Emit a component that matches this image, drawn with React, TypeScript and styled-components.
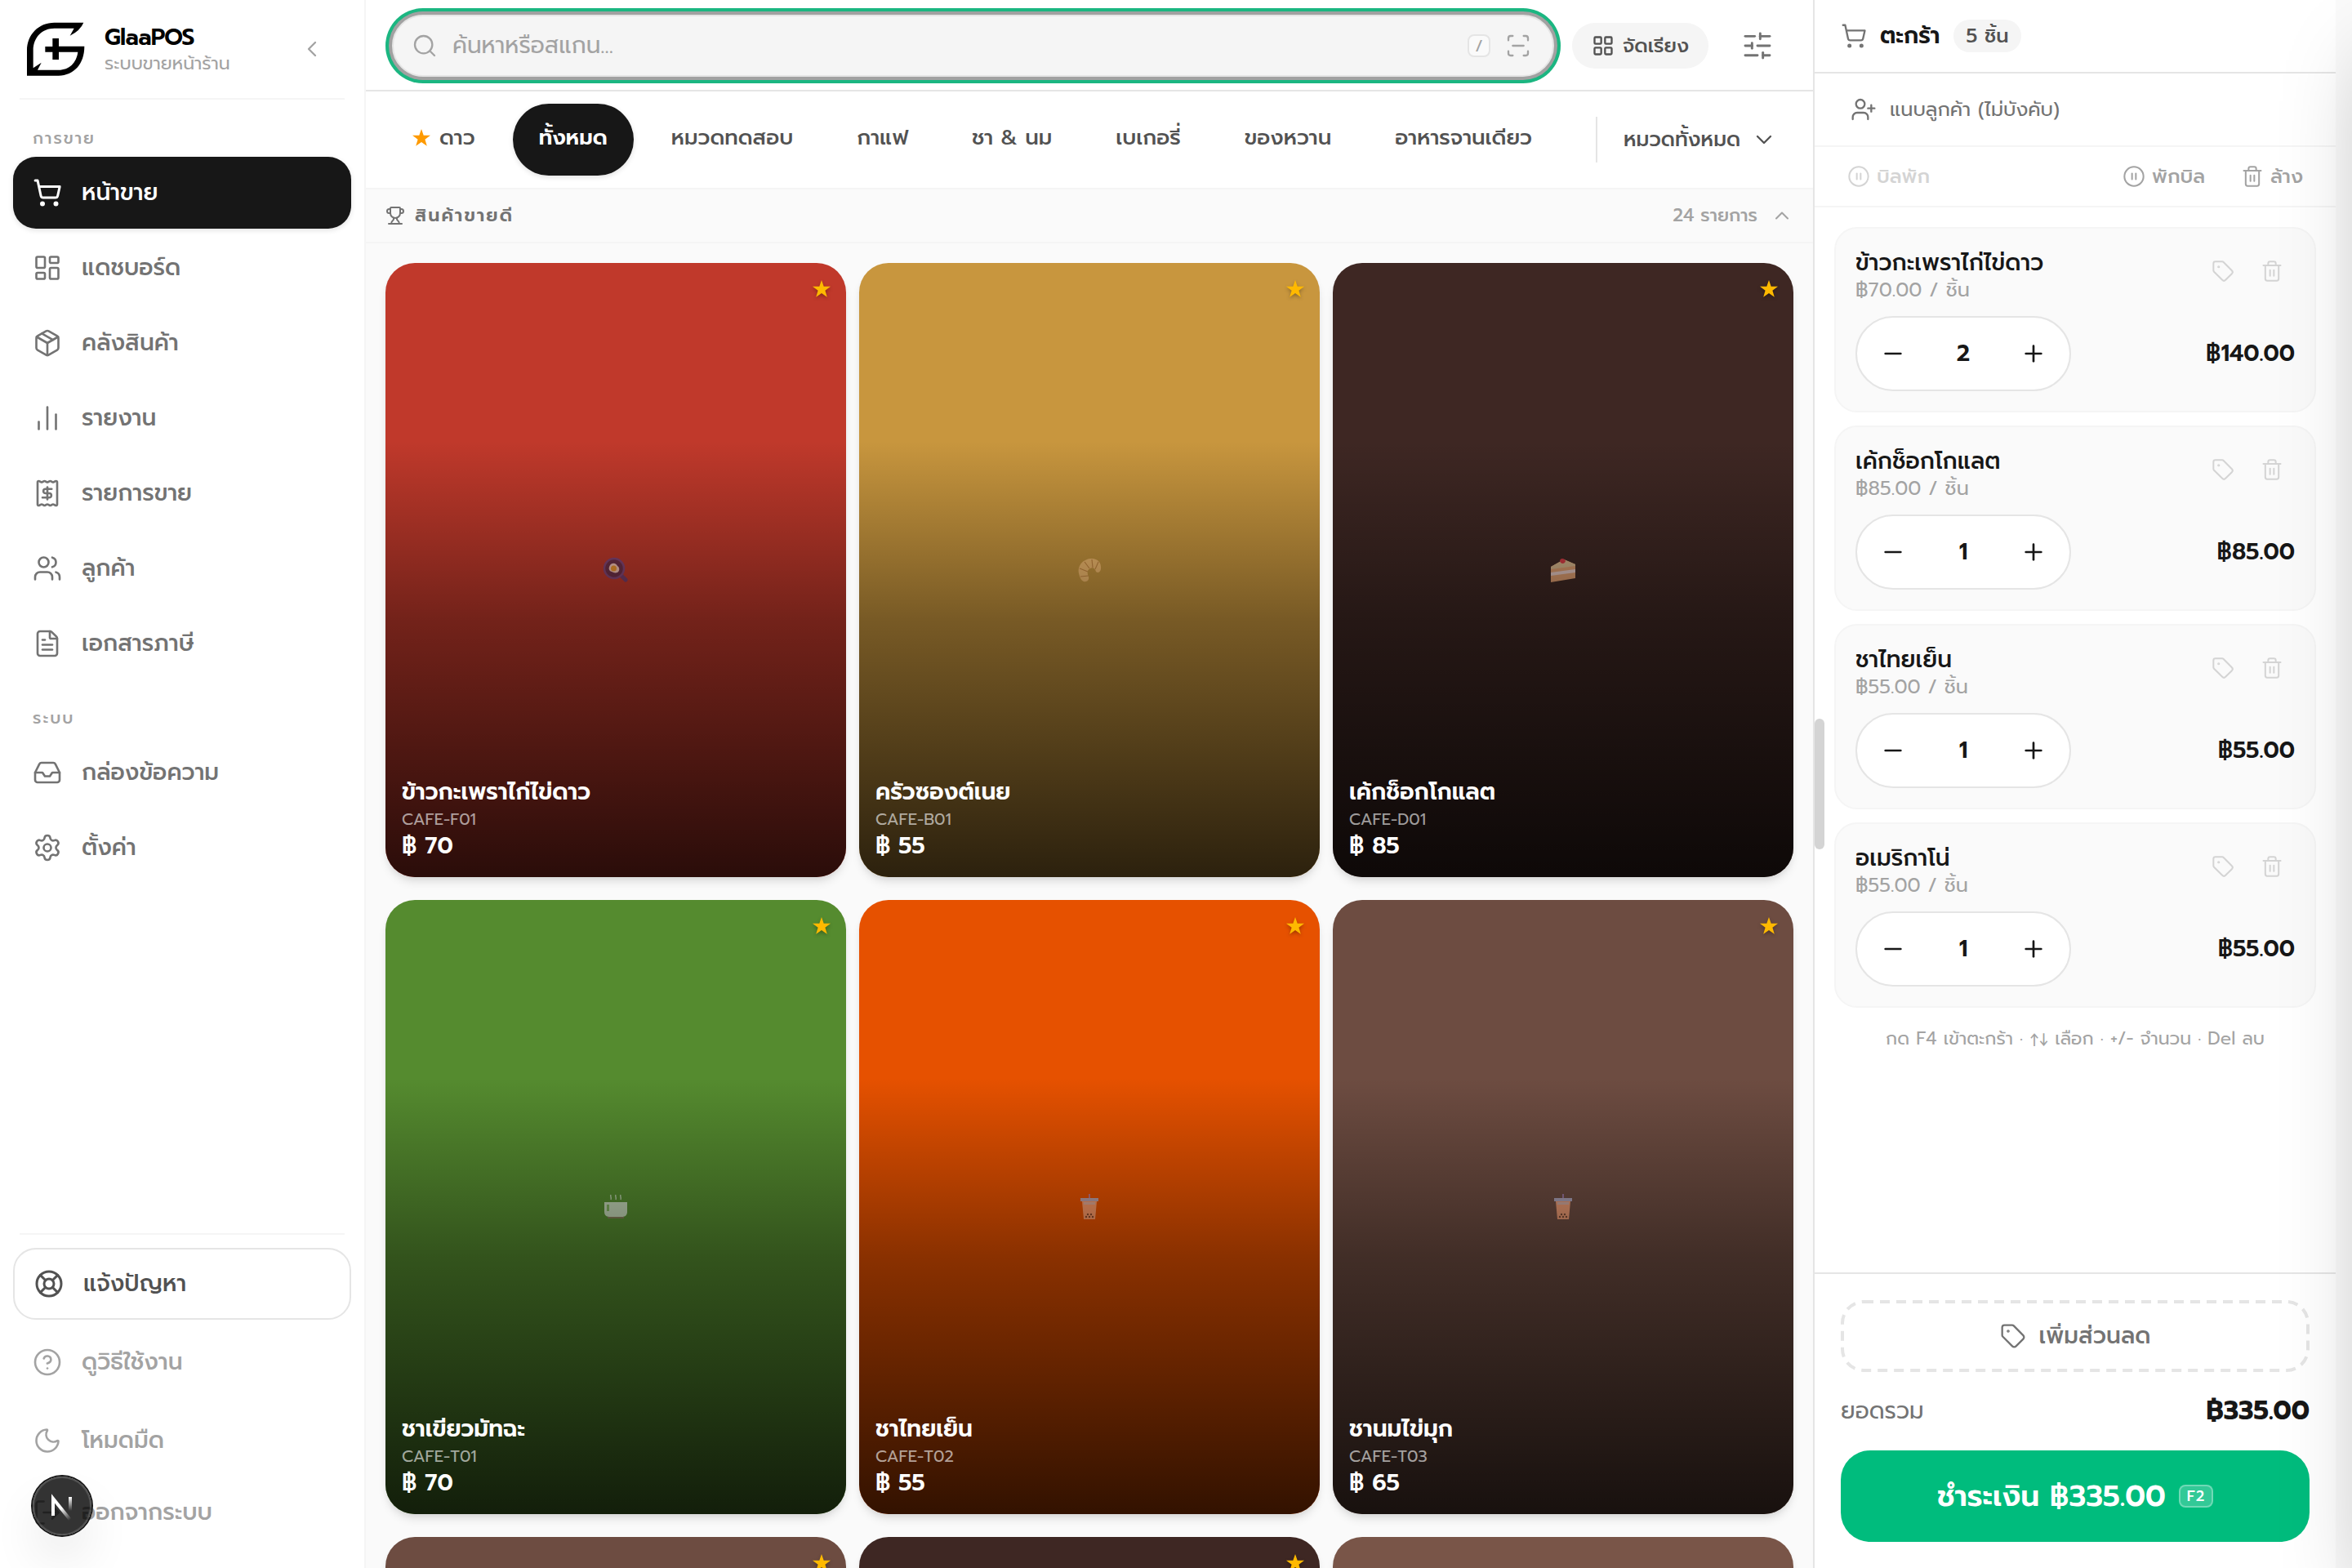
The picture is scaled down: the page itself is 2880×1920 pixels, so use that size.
import React from "react";
import styled, { createGlobalStyle, css } from "styled-components";
import {
  ChartNoAxesColumn,
  ChevronDown,
  ChevronLeft,
  ChevronUp,
  CircleHelp,
  CirclePause,
  FileText,
  Inbox,
  LayoutDashboard,
  LayoutGrid,
  LifeBuoy,
  LogOut,
  Minus,
  Moon,
  Package,
  Plus,
  ScanLine,
  Search,
  Settings,
  ShoppingCart,
  SlidersHorizontal,
  Tag,
  Trash2,
  Trophy,
  UserPlus,
  Users,
} from "lucide-react";

const color = {
  ink: "#171717",
  strong: "#525252",
  text: "#737373",
  muted: "#a3a3a3",
  faint: "#d4d4d4",
  line: "#e5e5e5",
  soft: "#f5f5f5",
  canvas: "#fafafa",
  green: "#00bc7d",
};

const GlobalStyle = createGlobalStyle`
  *, *::before, *::after { box-sizing: border-box; }
  body {
    margin: 0;
    overflow: hidden;
    background: ${color.canvas};
    color: ${color.ink};
    font-family: Prompt, "Noto Sans Thai", "Noto Sans", sans-serif;
    font-size: 28px;
    line-height: 40px;
  }
  button, input, select {
    font: inherit;
    color: inherit;
    letter-spacing: inherit;
    background: none;
    border: 0;
    padding: 0;
    margin: 0;
  }
  button { cursor: pointer; }
  h1, h2, h3, p, ul { margin: 0; padding: 0; font: inherit; list-style: none; }
  svg { flex: none; display: block; }
`;

const Page = styled.div`
  display: flex;
  height: 100vh;
  padding-right: 20px;
  overflow: hidden;
`;

/* ---------- sidebar ---------- */

const Sidebar = styled.aside`
  flex: 0 0 448px;
  display: flex;
  flex-direction: column;
  background: #fff;
  border-right: 2px solid ${color.soft};
  padding-bottom: 24px;
`;

const Brand = styled.header`
  display: flex;
  align-items: center;
  gap: 24px;
  margin: 0 24px;
  padding: 24px 8px;
  border-bottom: 2px solid ${color.soft};
`;

const BrandText = styled.div`
  flex: 1;
`;

const BrandName = styled.h1`
  font-size: 28px;
  line-height: 36px;
  font-weight: 600;
  letter-spacing: -0.025em;
  color: #000;
`;

const BrandTag = styled.p`
  font-size: 22px;
  line-height: 28px;
  color: ${color.muted};
`;

const CollapseButton = styled.button`
  display: grid;
  place-items: center;
  width: 64px;
  height: 64px;
  color: ${color.muted};
`;

const NavGroup = styled.nav`
  display: flex;
  flex-direction: column;
  gap: 4px;
  padding: 32px 16px 0;
`;

const NavLabel = styled.h2`
  padding: 0 24px;
  margin-bottom: 4px;
  font-size: 20px;
  line-height: 30px;
  font-weight: 500;
  letter-spacing: 0.1em;
  color: ${color.muted};
`;

type Tone = "normal" | "active" | "outlined" | "quiet";

const tones = {
  normal: css`
    color: ${color.text};
  `,
  active: css`
    color: #fff;
    background: ${color.ink};
    box-shadow: 0 2px 6px rgba(0, 0, 0, 0.12);
  `,
  outlined: css`
    color: ${color.strong};
    border: 2px solid ${color.line};
    margin-bottom: 8px;
  `,
  quiet: css`
    color: ${color.muted};
  `,
};

const itemStyle = css<{ $tone: Tone }>`
  display: flex;
  align-items: center;
  gap: 24px;
  height: 88px;
  padding: 0 24px;
  border-radius: 28px;
  font-weight: 500;
  text-align: left;
  text-decoration: none;
  ${(p) => tones[p.$tone]}
`;

const NavLink = styled.a<{ $tone: Tone }>`
  ${itemStyle}
`;

const NavButton = styled.button<{ $tone: Tone }>`
  ${itemStyle}
`;

const SidebarFoot = styled.div`
  display: flex;
  flex-direction: column;
  margin-top: auto;
  padding: 0 16px;
`;

const FootRule = styled.hr`
  width: calc(100% - 16px);
  height: 2px;
  margin: 0 8px 16px;
  border: 0;
  background: ${color.soft};
`;

const FootGap = styled.div`
  display: flex;
  flex-direction: column;
  gap: 8px;
`;

/* ---------- catalogue ---------- */

const Main = styled.main`
  flex: 1;
  min-width: 0;
  display: flex;
  flex-direction: column;
`;

const TopBar = styled.div`
  display: flex;
  align-items: center;
  gap: 16px;
  height: 112px;
  padding: 2px 24px 0 32px;
  background: #fff;
  border-bottom: 2px solid ${color.line};
`;

const SearchBox = styled.label`
  flex: 1;
  display: flex;
  align-items: center;
  gap: 18px;
  height: 76px;
  margin-right: 6px;
  padding: 0 26px 0 22px;
  color: ${color.muted};
  background: ${color.soft};
  border: 2px solid ${color.line};
  border-radius: 999px;
  box-shadow: 0 0 0 4px #a1a1a1, 0 0 0 8px #1bb681;
`;

const SearchInput = styled.input`
  flex: 1;
  min-width: 0;
  outline: 0;
  color: ${color.ink};
  &::placeholder {
    color: ${color.muted};
    opacity: 1;
  }
`;

const SlashKey = styled.kbd`
  display: grid;
  place-items: center;
  width: 28px;
  height: 28px;
  border: 2px solid ${color.line};
  border-radius: 8px;
  background: ${color.canvas};
  font: inherit;
  font-size: 20px;
  line-height: 24px;
`;

const SortButton = styled.button`
  display: flex;
  align-items: center;
  gap: 10px;
  height: 56px;
  padding: 0 24px;
  border-radius: 28px;
  background: ${color.soft};
  color: ${color.strong};
  font-size: 24px;
  font-weight: 500;
`;

const FilterButton = styled.button`
  display: grid;
  place-items: center;
  width: 88px;
  height: 88px;
  color: ${color.text};
`;

const CategoryBar = styled.div`
  display: flex;
  align-items: center;
  height: 120px;
  padding: 0 24px;
  background: #fff;
  border-bottom: 2px solid ${color.soft};
`;

const Pills = styled.div`
  flex: 1;
  display: flex;
  gap: 14px;
`;

const Pill = styled.button<{ $active?: boolean }>`
  display: flex;
  align-items: center;
  gap: 10px;
  height: 88px;
  padding: 0 32px 4px;
  border-radius: 44px;
  font-size: 26px;
  font-weight: ${(p) => (p.$active ? 600 : 500)};
  white-space: nowrap;
  color: ${(p) => (p.$active ? "#fff" : color.strong)};
  background: ${(p) => (p.$active ? color.ink : "transparent")};
  box-shadow: ${(p) => (p.$active ? "0 2px 6px rgba(0, 0, 0, 0.12)" : "none")};
`;

const AllCategories = styled.label`
  display: flex;
  align-items: center;
  gap: 12px;
  height: 56px;
  padding: 0 20px 0 32px;
  border-left: 2px solid ${color.line};
  color: ${color.strong};
`;

const CategorySelect = styled.select`
  appearance: none;
  outline: 0;
  font-size: 25px;
  font-weight: 500;
`;

const SectionHead = styled.button`
  display: flex;
  align-items: center;
  gap: 12px;
  height: 66px;
  padding: 0 24px;
  border-bottom: 2px solid ${color.soft};
  color: ${color.text};
  text-align: left;
`;

const SectionTitle = styled.span`
  flex: 1;
  font-size: 22px;
  line-height: 32px;
  font-weight: 600;
  letter-spacing: 0.1em;
`;

const SectionCount = styled.span`
  display: flex;
  align-items: center;
  gap: 16px;
  font-size: 22px;
  line-height: 32px;
  font-weight: 500;
  color: ${color.muted};
`;

const Shelf = styled.div`
  flex: 1;
  min-height: 0;
  overflow: hidden;
`;

const Grid = styled.div`
  display: grid;
  grid-template-columns: repeat(3, 1fr);
  gap: 28px 16px;
  padding: 24px;
`;

const Card = styled.button<{ $color: string }>`
  position: relative;
  display: grid;
  aspect-ratio: 3 / 4;
  border-radius: 36px;
  overflow: hidden;
  color: #fff;
  text-align: left;
  background: ${(p) => p.$color};
  box-shadow: 0 8px 12px -2px rgba(0, 0, 0, 0.1), 0 4px 8px -4px rgba(0, 0, 0, 0.1);
  & > * {
    grid-area: 1 / 1;
  }
`;

const CardArt = styled.span`
  place-self: center;
  opacity: 0.85;
`;

const CardText = styled.span`
  position: relative;
  align-self: stretch;
  display: flex;
  flex-direction: column;
  justify-content: flex-end;
  padding: 20px;
  background: linear-gradient(
    to bottom,
    rgba(0, 0, 0, 0) 29%,
    rgba(0, 0, 0, 0.4) 58%,
    rgba(0, 0, 0, 0.78) 100%
  );
`;

const CardName = styled.span`
  font-size: 28px;
  line-height: 36px;
  font-weight: 600;
`;

const CardCode = styled.span`
  font-size: 20px;
  line-height: 30px;
  color: rgba(255, 255, 255, 0.6);
`;

const CardPrice = styled.span`
  font-size: 28px;
  line-height: 36px;
  font-weight: 600;
`;

const CardStar = styled.span`
  position: absolute;
  top: 20px;
  right: 18px;
  filter: drop-shadow(0 2px 2px rgba(0, 0, 0, 0.3));
`;

/* ---------- cart ---------- */

const Cart = styled.aside`
  position: relative;
  flex: 0 0 640px;
  display: flex;
  flex-direction: column;
  background: #fff;
  border-left: 2px solid ${color.line};
`;

const ResizeHandle = styled.div`
  position: absolute;
  left: 0;
  top: calc(50% - 80px);
  width: 12px;
  height: 160px;
  border-radius: 6px;
  background: ${color.faint};
`;

const CartHead = styled.header`
  display: flex;
  align-items: center;
  gap: 16px;
  height: 90px;
  padding: 0 32px;
  border-bottom: 2px solid ${color.line};
  color: ${color.text};
`;

const CartTitle = styled.h2`
  font-weight: 600;
  font-size: 28px;
  color: ${color.ink};
`;

const CartCount = styled.span`
  height: 40px;
  padding: 0 16px;
  border-radius: 20px;
  background: ${color.soft};
  color: ${color.strong};
  font-size: 24px;
  font-weight: 500;
`;

const CustomerButton = styled.button`
  display: flex;
  align-items: center;
  gap: 16px;
  height: 90px;
  padding: 0 44px;
  border-bottom: 2px solid ${color.soft};
  color: ${color.text};
  font-size: 24px;
`;

const BillBar = styled.div`
  display: flex;
  align-items: center;
  height: 74px;
  padding: 0 18px;
  border-bottom: 2px solid ${color.soft};
`;

const BillButton = styled.button`
  display: flex;
  align-items: center;
  gap: 8px;
  height: 64px;
  padding: 0 22px;
  color: ${color.muted};
  font-size: 24px;
  font-weight: 500;
  &:first-child {
    margin-right: auto;
  }
  &:disabled {
    color: ${color.faint};
  }
`;

const Lines = styled.ul`
  flex: 1;
  min-height: 0;
  display: flex;
  flex-direction: column;
  gap: 16px;
  padding: 24px;
`;

const Line = styled.li`
  display: flex;
  flex-direction: column;
  gap: 16px;
  padding: 24px;
  border: 2px solid ${color.soft};
  border-radius: 28px;
  background: ${color.canvas};
`;

const LineRow = styled.div`
  display: flex;
  align-items: center;
  justify-content: space-between;
`;

const LineName = styled.h3`
  font-size: 28px;
  line-height: 35px;
  font-weight: 500;
`;

const LineUnit = styled.p`
  font-size: 24px;
  line-height: 32px;
  color: ${color.muted};
`;

const LineTools = styled.div`
  display: flex;
  align-self: flex-start;
  gap: 4px;
`;

const ToolButton = styled.button`
  display: grid;
  place-items: center;
  width: 56px;
  height: 56px;
  color: ${color.faint};
`;

const Stepper = styled.div`
  display: flex;
  align-items: center;
  width: 264px;
  height: 92px;
  border: 2px solid ${color.line};
  border-radius: 46px;
  background: #fff;
`;

const StepButton = styled.button`
  display: grid;
  place-items: center;
  width: 88px;
  height: 88px;
`;

const Quantity = styled.output`
  flex: 1;
  text-align: center;
  font-weight: 600;
`;

const LineTotal = styled.strong`
  font-weight: 600;
`;

const Hint = styled.li`
  padding-top: 6px;
  text-align: center;
  font-size: 22px;
  line-height: 32px;
  color: ${color.muted};
`;

const CartFoot = styled.footer`
  display: flex;
  flex-direction: column;
  gap: 24px;
  padding: 32px;
  border-top: 2px solid ${color.line};
`;

const DiscountButton = styled.button`
  position: relative;
  display: flex;
  align-items: center;
  justify-content: center;
  gap: 16px;
  height: 88px;
  color: ${color.text};
  font-weight: 500;
`;

const DashedOutline = styled.svg`
  position: absolute;
  inset: 0;
  width: 100%;
  height: 100%;
  rect {
    width: calc(100% - 4px);
    height: calc(100% - 4px);
  }
`;

const TotalRow = styled.div`
  display: flex;
  align-items: center;
  justify-content: space-between;
  line-height: 48px;
  color: ${color.text};
`;

const TotalAmount = styled.strong`
  font-size: 32px;
  font-weight: 700;
  color: ${color.ink};
`;

const PayButton = styled.button`
  display: flex;
  align-items: center;
  justify-content: center;
  gap: 16px;
  height: 112px;
  border-radius: 36px;
  background: ${color.green};
  color: #fff;
  font-size: 36px;
  font-weight: 600;
`;

const PayKey = styled.kbd`
  padding: 0 8px;
  border: 2px solid rgba(255, 255, 255, 0.3);
  border-radius: 8px;
  background: rgba(255, 255, 255, 0.2);
  font: inherit;
  font-size: 18px;
  line-height: 24px;
  font-weight: 500;
  letter-spacing: 0.05em;
`;

/* ---------- overlays ---------- */

const Drawer = styled.div`
  position: fixed;
  top: 0;
  bottom: 0;
  left: 100%;
  width: 640px;
  box-shadow: 0 50px 100px -24px rgba(0, 0, 0, 0.25);
`;

const DevBadge = styled.button`
  position: fixed;
  left: 40px;
  bottom: 40px;
  width: 72px;
  height: 72px;
  border-radius: 50%;
  background: rgba(0, 0, 0, 0.8);
  box-shadow: 0 0 0 2px #171717, inset 0 0 0 2px rgba(255, 255, 255, 0.14),
    0 32px 64px -16px rgba(0, 0, 0, 0.24);
`;

/* ---------- drawings ---------- */

const Logo = () => (
  <svg width="72" height="72" viewBox="36 72 216 216" aria-hidden="true">
    <path d="M247 83H140C82 83 39 127 39 185V278H155C212 276 250 235 250 170H156V141H133V171H106V191H133V219H156V191H226C221 230 195 257 155 257H78L92 230L62 250V185C62 137 95 104 140 104H212L197 131Q235 112 247 83Z" />
  </svg>
);

const Star = ({ size, fill }: { size: number; fill: string }) => (
  <svg width={size} height={size} viewBox="0 0 24 24" aria-hidden="true">
    <path fill={fill} d="M12 1l2.700 7.700H23l-6.600 5 2.400 8L12 17l-6.800 4.700 2.400-8L1 8.700h8.300z" />
  </svg>
);

const ReceiptIcon = ({ size, strokeWidth }: { size: number; strokeWidth: number }) => (
  <svg
    width={size}
    height={size}
    viewBox="0 0 24 24"
    fill="none"
    stroke="currentColor"
    strokeWidth={strokeWidth}
    strokeLinecap="round"
    strokeLinejoin="round"
    aria-hidden="true"
  >
    <path d="M4 3a1 1 0 0 1 1-1 1.300 1.300 0 0 1 .7.2l.933.6a1.300 1.300 0 0 0 1.400 0l.934-.6a1.300 1.300 0 0 1 1.400 0l.933.6a1.300 1.300 0 0 0 1.400 0l.933-.6a1.300 1.300 0 0 1 1.400 0l.934.6a1.300 1.300 0 0 0 1.400 0l.933-.6A1.300 1.300 0 0 1 19 2a1 1 0 0 1 1 1v18a1 1 0 0 1-1 1 1.300 1.300 0 0 1-.7-.2l-.933-.6a1.300 1.300 0 0 0-1.400 0l-.934.6a1.300 1.300 0 0 1-1.400 0l-.933-.6a1.300 1.300 0 0 0-1.400 0l-.933.6a1.300 1.300 0 0 1-1.400 0l-.934-.6a1.300 1.300 0 0 0-1.400 0l-.933.6a1.300 1.300 0 0 1-.7.2 1 1 0 0 1-1-1z" />
    <path d="M12 7v10" />
    <path d="M15.500 8.500H10.500a1.750 1.750 0 0 0 0 3.500h3a1.750 1.750 0 0 1 0 3.500H8" />
  </svg>
);

type Food = "egg" | "croissant" | "cake" | "cup" | "boba";

const drawings: Record<Food, React.ReactNode> = {
  egg: (
    <>
      <path d="M23 23l5 5" stroke="#6a3f78" strokeWidth="5" strokeLinecap="round" />
      <circle cx="14" cy="14" r="12" fill="#63304f" stroke="#7d4a86" strokeWidth="2.500" />
      <path d="M9 10c3-4 8-2 9 1 3 2 3 6 0 8-3 1-5 0-7-1-4-1-4-5-2-8z" fill="#ffdccf" />
      <circle cx="13.500" cy="14" r="3.500" fill="#f8a62e" />
    </>
  ),
  croissant: (
    <>
      <path
        d="M3 20C1 10 9 2 19 2c7 0 12 5 11 13-1 4-4 5-6 3-1-4-4-6-7-4-4 2-4 6-2 10 1 4-2 7-6 6-3-1-5-5-6-10z"
        fill="#ffc478"
      />
      <path d="M10 6l6 8M4 14l10 4M5 24l10-1M19 3l1 10M27 6l-4 9" stroke="#c98844" strokeWidth="1.200" />
    </>
  ),
  cake: (
    <>
      <path d="M1 12L17 3l14 6v17L1 31z" fill="#f7b07c" />
      <path d="M1 19l30-4v4L1 23z" fill="#ffe2dc" />
      <path d="M1 12L17 3l14 6v2L1 15z" fill="#f0cd9c" />
      <path d="M12 5c0-4 6-4 7 0-1 4-6 4-7 0z" fill="#f0404a" />
    </>
  ),
  cup: (
    <>
      <path d="M10 1c-1 2 1 3 0 6M16 1c-1 2 1 3 0 6M22 1c-1 2 1 3 0 6" stroke="#dfe8da" strokeWidth="1.200" fill="none" />
      <path d="M2 10h28v12c0 3-2 6-6 6H8c-4 0-6-3-6-6z" fill="#d6e2cd" />
      <path d="M6 28h20v2H6z" fill="#8d7a5e" />
      <path d="M5 13h3v8H5z" fill="#86b565" />
    </>
  ),
  boba: (
    <>
      <path d="M16 0v8" stroke="#b08ad0" strokeWidth="1.500" />
      <path d="M5 5h22v4H5z" fill="#b6b2cc" />
      <path d="M7 9h18l-2 22H9z" fill="#ffa67a" />
      <path d="M9 10h14v3H9z" fill="#e0b8b0" />
      <g fill="#7a4a34">
        <circle cx="12" cy="28" r="1.200" />
        <circle cx="16" cy="28" r="1.200" />
        <circle cx="20" cy="28" r="1.200" />
        <circle cx="14" cy="25" r="1.200" />
        <circle cx="18" cy="25" r="1.200" />
      </g>
    </>
  ),
};

const FoodIcon = ({ food }: { food: Food }) => (
  <svg width="32" height="32" viewBox="0 0 32 32" fill="none" aria-hidden="true">
    {drawings[food]}
  </svg>
);

const BadgeMark = () => (
  <svg width="72" height="72" viewBox="0 0 72 72" fill="none" aria-hidden="true">
    <defs>
      <linearGradient id="slant" x1="36" y1="38" x2="47" y2="52" gradientUnits="userSpaceOnUse">
        <stop stopColor="#fff" />
        <stop offset="1" stopColor="#fff" stopOpacity="0" />
      </linearGradient>
      <linearGradient id="stem" x1="45" y1="25" x2="45" y2="42" gradientUnits="userSpaceOnUse">
        <stop stopColor="#fff" />
        <stop offset="1" stopColor="#fff" stopOpacity="0" />
      </linearGradient>
    </defs>
    <path d="M25 48V27L46 53" stroke="url(#slant)" strokeWidth="4" />
    <path d="M46 25v17" stroke="url(#stem)" strokeWidth="4" />
  </svg>
);

/* ---------- data ---------- */

const menuMain = [
  { label: "หน้าขาย", Icon: ShoppingCart },
  { label: "แดชบอร์ด", Icon: LayoutDashboard },
  { label: "คลังสินค้า", Icon: Package },
  { label: "รายงาน", Icon: ChartNoAxesColumn },
  { label: "รายการขาย", Icon: ReceiptIcon },
  { label: "ลูกค้า", Icon: Users },
  { label: "เอกสารภาษี", Icon: FileText },
];

const menuSystem = [
  { label: "กล่องข้อความ", Icon: Inbox },
  { label: "ตั้งค่า", Icon: Settings },
];

const categories = ["ทั้งหมด", "หมวดทดสอบ", "กาแฟ", "ชา & นม", "เบเกอรี่", "ของหวาน", "อาหารจานเดียว"];

interface Product {
  color: string;
  star: boolean;
  name?: string;
  code?: string;
  price?: number;
  food?: Food;
}

const products: Product[] = [
  { color: "#c0392b", star: true, name: "ข้าวกะเพราไก่ไข่ดาว", code: "CAFE-F01", price: 70, food: "egg" },
  { color: "#c8963e", star: true, name: "ครัวซองต์เนย", code: "CAFE-B01", price: 55, food: "croissant" },
  { color: "#3e2723", star: true, name: "เค้กช็อกโกแลต", code: "CAFE-D01", price: 85, food: "cake" },
  { color: "#558b2f", star: true, name: "ชาเขียวมัทฉะ", code: "CAFE-T01", price: 70, food: "cup" },
  { color: "#e65100", star: true, name: "ชาไทยเย็น", code: "CAFE-T02", price: 55, food: "boba" },
  { color: "#6d4c41", star: true, name: "ชานมไข่มุก", code: "CAFE-T03", price: 65, food: "boba" },
  { color: "#6d4c41", star: true },
  { color: "#3e2723", star: true },
  { color: "#795548", star: false },
];

const cartLines = [
  { name: "ข้าวกะเพราไก่ไข่ดาว", unit: 70, qty: 2 },
  { name: "เค้กช็อกโกแลต", unit: 85, qty: 1 },
  { name: "ชาไทยเย็น", unit: 55, qty: 1 },
  { name: "อเมริกาโน่", unit: 55, qty: 1 },
];

const baht = (n: number) => `฿${n.toFixed(2)}`;
const total = cartLines.reduce((sum, l) => sum + l.unit * l.qty, 0);
const pieces = cartLines.reduce((sum, l) => sum + l.qty, 0);

/* ---------- page ---------- */

export default function App() {
  return (
    <>
      <GlobalStyle />
      <Page>
        <Sidebar>
          <Brand>
            <Logo />
            <BrandText>
              <BrandName>GlaaPOS</BrandName>
              <BrandTag>ระบบขายหน้าร้าน</BrandTag>
            </BrandText>
            <CollapseButton type="button" aria-label="ย่อเมนู">
              <ChevronLeft size={32} strokeWidth={1.75} />
            </CollapseButton>
          </Brand>

          <NavGroup>
            <NavLabel>การขาย</NavLabel>
            {menuMain.map(({ label, Icon }, i) => (
              <NavLink key={label} href="#" $tone={i === 0 ? "active" : "normal"}>
                <Icon size={36} strokeWidth={i === 0 ? 2 : 1.75} />
                {label}
              </NavLink>
            ))}
          </NavGroup>
          <NavGroup>
            <NavLabel>ระบบ</NavLabel>
            {menuSystem.map(({ label, Icon }) => (
              <NavLink key={label} href="#" $tone="normal">
                <Icon size={36} strokeWidth={1.75} />
                {label}
              </NavLink>
            ))}
          </NavGroup>

          <SidebarFoot>
            <FootRule />
            <NavButton type="button" $tone="outlined">
              <LifeBuoy size={36} strokeWidth={2} />
              แจ้งปัญหา
            </NavButton>
            <FootGap>
              <NavLink href="#" $tone="quiet">
                <CircleHelp size={36} strokeWidth={1.75} />
                ดูวิธีใช้งาน
              </NavLink>
              <NavButton type="button" $tone="quiet">
                <Moon size={36} strokeWidth={1.75} />
                โหมดมืด
              </NavButton>
            </FootGap>
            <NavButton type="button" $tone="quiet">
              <LogOut size={36} strokeWidth={1.75} />
              ออกจากระบบ
            </NavButton>
          </SidebarFoot>
        </Sidebar>

        <Main>
          <TopBar>
            <SearchBox>
              <Search size={32} strokeWidth={1.75} />
              <SearchInput type="text" placeholder="ค้นหาหรือสแกน..." aria-label="ค้นหาหรือสแกน" />
              <SlashKey>/</SlashKey>
              <ScanLine size={32} strokeWidth={1.75} />
            </SearchBox>
            <SortButton type="button">
              <LayoutGrid size={28} strokeWidth={2} />
              จัดเรียง
            </SortButton>
            <FilterButton type="button" aria-label="ตัวกรอง">
              <SlidersHorizontal size={40} strokeWidth={1.75} />
            </FilterButton>
          </TopBar>

          <CategoryBar>
            <Pills>
              <Pill type="button">
                <Star size={24} fill="#fe9a00" />
                ดาว
              </Pill>
              {categories.map((c, i) => (
                <Pill key={c} type="button" $active={i === 0}>
                  {c}
                </Pill>
              ))}
            </Pills>
            <AllCategories>
              <CategorySelect aria-label="หมวดหมู่" defaultValue="all">
                <option value="all">หมวดทั้งหมด</option>
              </CategorySelect>
              <ChevronDown size={32} strokeWidth={1.75} />
            </AllCategories>
          </CategoryBar>

          <SectionHead type="button" aria-expanded="true">
            <Trophy size={24} strokeWidth={2} />
            <SectionTitle>สินค้าขายดี</SectionTitle>
            <SectionCount>
              24 รายการ
              <ChevronUp size={28} strokeWidth={1.75} />
            </SectionCount>
          </SectionHead>

          <Shelf>
            <Grid>
              {products.map((p, i) => (
                <Card key={i} type="button" $color={p.color}>
                  {p.food && (
                    <CardArt>
                      <FoodIcon food={p.food} />
                    </CardArt>
                  )}
                  <CardText>
                    {p.name && (
                      <>
                        <CardName>{p.name}</CardName>
                        <CardCode>{p.code}</CardCode>
                        <CardPrice>฿ {p.price}</CardPrice>
                      </>
                    )}
                  </CardText>
                  {p.star && (
                    <CardStar>
                      <Star size={24} fill="#ffb900" />
                    </CardStar>
                  )}
                </Card>
              ))}
            </Grid>
          </Shelf>
        </Main>

        <Cart>
          <CartHead>
            <ShoppingCart size={32} strokeWidth={1.75} />
            <CartTitle>ตะกร้า</CartTitle>
            <CartCount>{pieces} ชิ้น</CartCount>
          </CartHead>
          <CustomerButton type="button">
            <UserPlus size={32} strokeWidth={1.75} />
            แนบลูกค้า (ไม่บังคับ)
          </CustomerButton>
          <BillBar>
            <BillButton type="button" disabled>
              <CirclePause size={28} strokeWidth={1.75} />
              บิลพัก
            </BillButton>
            <BillButton type="button">
              <CirclePause size={28} strokeWidth={1.75} />
              พักบิล
            </BillButton>
            <BillButton type="button">
              <Trash2 size={28} strokeWidth={1.75} />
              ล้าง
            </BillButton>
          </BillBar>

          <Lines>
            {cartLines.map((l) => (
              <Line key={l.name}>
                <LineRow>
                  <div>
                    <LineName>{l.name}</LineName>
                    <LineUnit>{baht(l.unit)} / ชิ้น</LineUnit>
                  </div>
                  <LineTools>
                    <ToolButton type="button" aria-label="ส่วนลด">
                      <Tag size={28} strokeWidth={1.75} />
                    </ToolButton>
                    <ToolButton type="button" aria-label="ลบ">
                      <Trash2 size={28} strokeWidth={1.75} />
                    </ToolButton>
                  </LineTools>
                </LineRow>
                <LineRow>
                  <Stepper>
                    <StepButton type="button" aria-label="ลด">
                      <Minus size={32} strokeWidth={2} />
                    </StepButton>
                    <Quantity>{l.qty}</Quantity>
                    <StepButton type="button" aria-label="เพิ่ม">
                      <Plus size={32} strokeWidth={2} />
                    </StepButton>
                  </Stepper>
                  <LineTotal>{baht(l.unit * l.qty)}</LineTotal>
                </LineRow>
              </Line>
            ))}
            <Hint>กด F4 เข้าตะกร้า · ↑↓ เลือก · +/- จำนวน · Del ลบ</Hint>
          </Lines>

          <CartFoot>
            <DiscountButton type="button">
              <DashedOutline aria-hidden="true">
                <rect x="2" y="2" rx="26" fill="none" stroke={color.line} strokeWidth="4" strokeDasharray="12 8" />
              </DashedOutline>
              <Tag size={32} strokeWidth={1.75} />
              เพิ่มส่วนลด
            </DiscountButton>
            <TotalRow>
              <span>ยอดรวม</span>
              <TotalAmount>{baht(total)}</TotalAmount>
            </TotalRow>
            <PayButton type="button">
              ชำระเงิน {baht(total)}
              <PayKey>F2</PayKey>
            </PayButton>
          </CartFoot>
          <ResizeHandle />
        </Cart>
      </Page>
      <Drawer />
      <DevBadge type="button" aria-label="Next.js">
        <BadgeMark />
      </DevBadge>
    </>
  );
}
